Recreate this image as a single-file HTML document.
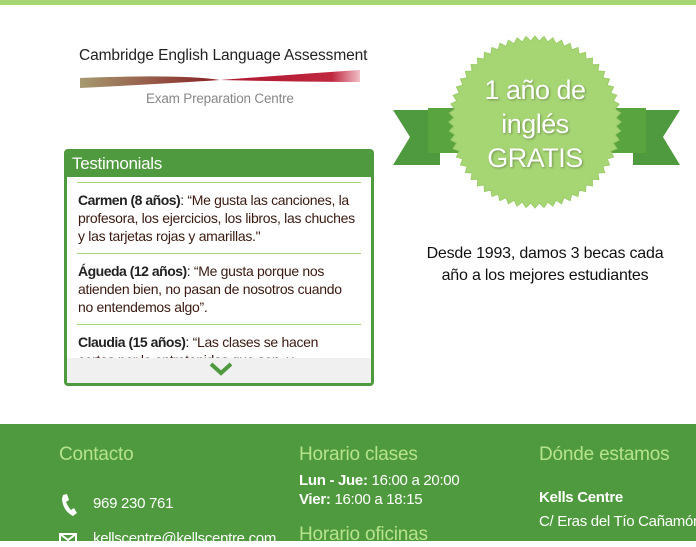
<!DOCTYPE html>
<html><head><meta charset="utf-8"><style>
*{margin:0;padding:0;box-sizing:border-box}
body{width:696px;height:541px;overflow:hidden;background:#fff;font-family:"Liberation Sans",sans-serif;position:relative;color:#222}
.a{position:absolute;white-space:nowrap}
#box{position:absolute;left:64px;top:149px;width:310px;height:237px;border:3px solid #4f9a3e;border-radius:4px;background:#fff;overflow:hidden}
#box .h{background:#4f9a3e;height:25px;color:#fff;font-size:17px;padding:2px 0 0 5px;letter-spacing:-.3px}
#box .it{margin:0 10px;border-top:1px solid #a6d574;padding:8px 4px 8px 1px;font-size:14px;line-height:18px;color:#3a1a10;letter-spacing:-.3px;white-space:normal}
#box .it b{color:#222;letter-spacing:-.5px}
#box .ft{position:absolute;left:0;right:0;bottom:0;height:25px;background:#f0f0f0}
footer{position:absolute;left:0;top:424px;width:696px;height:117px;background:#4f9a3e;color:#fff}
footer .hd{color:#b6e38a;font-size:19px;letter-spacing:-.2px}
footer .t{font-size:15px;letter-spacing:-.3px}
</style></head><body>
<div class="a" style="left:0;top:0;width:696px;height:5px;background:#a6d574"></div>
<div class="a" style="left:79px;top:47px;font-size:15.5px;color:#222;letter-spacing:-.1px">Cambridge English Language Assessment</div>
<svg class="a" style="left:80px;top:68px" width="280" height="22"><defs><linearGradient id="g1" x1="0" x2="1"><stop offset="0" stop-color="#a69a70"/><stop offset=".45" stop-color="#8a2a2a"/><stop offset=".55" stop-color="#b01830"/><stop offset=".9" stop-color="#c02840"/><stop offset="1" stop-color="#f0c0c8"/></linearGradient></defs><path d="M0 10 Q100 6 140 12 Q220 6 280 2 L280 14 Q220 14 140 12 Q80 16 0 20Z" fill="url(#g1)"/></svg>
<div class="a" style="left:146px;top:91px;font-size:13.5px;color:#888;letter-spacing:-.2px">Exam Preparation Centre</div>
<div id="box"><div class="h">Testimonials</div>
<div class="it" style="margin-top:5px"><b>Carmen (8 años)</b>: “Me gusta las canciones, la profesora, los ejercicios, los libros, las chuches y las tarjetas rojas y amarillas."</div>
<div class="it"><b>Águeda (12 años)</b>: “Me gusta porque nos atienden bien, no pasan de nosotros cuando no entendemos algo”.</div>
<div class="it"><b>Claudia (15 años)</b>: “Las clases se hacen cortas por lo entretenidas que son, y practicamos mucho.”</div>
<div class="ft"><svg style="position:absolute;left:142px;top:4px" width="24" height="14"><path d="M2 2 L12 11 L22 2" stroke="#4f9a3e" stroke-width="4" fill="none"/></svg></div>
</div>
<svg class="a" style="left:390px;top:30px" width="306" height="180">
<path d="M3 80 L50 80 L50 135 L3 135 L20 107Z" fill="#4f9a3e"/>
<path d="M290 80 L243 80 L243 135 L290 135 L273 107Z" fill="#4f9a3e"/>
<rect x="38" y="78" width="60" height="45" fill="#5aa43f"/><rect x="196" y="78" width="60" height="45" fill="#5aa43f"/>
<polygon id="st" fill="#a6d574" stroke="#9ccd6a"/>
</svg>
<script>
(function(){var p=[],n=60,cx=145,cy=92,R=86,r=81;for(var i=0;i<2*n;i++){var a=Math.PI*i/n,rr=i%2?r:R;p.push((cx+rr*Math.cos(a)).toFixed(1)+","+(cy+rr*Math.sin(a)).toFixed(1));}document.getElementById("st").setAttribute("points",p.join(" "));})();
</script>
<div class="a" style="left:435px;top:73px;width:200px;text-align:center;color:#fff;font-size:27px;line-height:34px;letter-spacing:-.5px;text-shadow:1px 1px 2px rgba(0,0,0,.3)">1 año de<br>inglés<br>GRATIS</div>
<div class="a" style="left:395px;top:243px;width:300px;text-align:center;font-size:16px;line-height:22px;color:#111;letter-spacing:-.2px">Desde 1993, damos 3 becas cada<br>año a los mejores estudiantes</div>
<footer>
<div class="a hd" style="left:59px;top:20px">Contacto</div>
<div class="a hd" style="left:299px;top:20px">Horario clases</div>
<div class="a hd" style="left:539px;top:20px">Dónde estamos</div>
<div class="a t" style="left:299px;top:48px"><b>Lun - Jue:</b> 16:00 a 20:00</div>
<div class="a t" style="left:299px;top:67px"><b>Vier:</b> 16:00 a 18:15</div>
<div class="a hd" style="left:299px;top:100px">Horario oficinas</div>
<svg class="a" style="left:59px;top:69px" width="18" height="24"><path d="M4 2 L8 1 L10 7 L7 9 Q9 14 12 17 L15 15 L18 20 L14 23 Q4 18 3 6Z" fill="#fff"/></svg>
<div class="a t" style="left:93px;top:71px">969 230 761</div>
<svg class="a" style="left:59px;top:109px" width="18" height="12"><rect x="1" y="1" width="16" height="10" fill="none" stroke="#fff" stroke-width="2"/><path d="M1 1 L9 7 L17 1" stroke="#fff" stroke-width="2" fill="none"/></svg>
<div class="a t" style="left:93px;top:106px">kellscentre@kellscentre.com</div>
<div class="a t" style="left:539px;top:65px;font-weight:bold">Kells Centre</div>
<div class="a t" style="left:539px;top:89px">C/ Eras del Tío Cañamón</div>
</footer>
</body></html>
